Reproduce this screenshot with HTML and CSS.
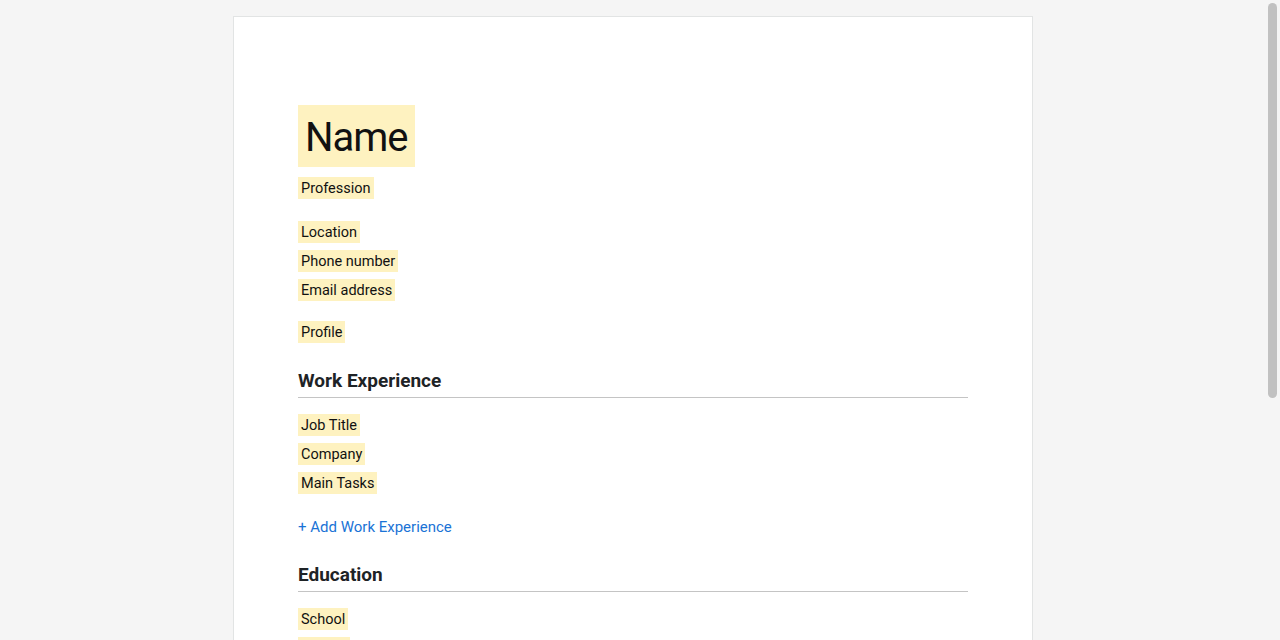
FILE: index.html
```html
<!DOCTYPE html>
<html lang="en">
<head>
<meta charset="utf-8">
<title>Resume</title>
<link rel="stylesheet" href="styles.css">
</head>
<body>
<main class="sheet">
  <div class="name field">Name</div>
  <div class="field profession">Profession</div>

  <div class="group contact">
    <div class="field">Location</div>
    <div class="field">Phone number</div>
    <div class="field">Email address</div>
  </div>

  <div class="group profile">
    <div class="field">Profile</div>
  </div>

  <section class="section">
    <h2 class="section-title">Work Experience</h2>
    <div class="group">
      <div class="field">Job Title</div>
      <div class="field">Company</div>
      <div class="field">Main Tasks</div>
    </div>
    <a class="add-link" href="#">+ Add Work Experience</a>
  </section>

  <section class="section">
    <h2 class="section-title">Education</h2>
    <div class="group">
      <div class="field">School</div>
      <div class="field">Degree</div>
      <div class="field">Dates</div>
    </div>
  </section>
</main>
<div class="scroll-thumb"></div>
</body>
</html>
```

FILE: styles.css
```css
html {
  overflow: hidden;
  height: 100%;
}

body {
  margin: 0;
  padding: 0 14px 0 0;
  background: #f5f5f5;
  font-family: Roboto, "Liberation Sans", Arial, sans-serif;
  color: #111;
}

.sheet {
  width: 800px;
  box-sizing: border-box;
  margin: 16px auto 0;
  padding: 88px 64px 40px;
  background: #fff;
  border: 1px solid #e2e4e4;
  border-bottom: none;
  min-height: 1000px;
  display: flex;
  flex-direction: column;
  align-items: flex-start;
}

.field {
  background: #fef2c0;
  font-size: 14.5px;
  line-height: 21px;
  padding: 1px 3px 0;
  color: #111;
}

.name {
  font-size: 40px;
  line-height: 59px;
  letter-spacing: -1px;
  padding: 3px 7px 0 7px;
}

.profession {
  margin-top: 10px;
}

.group {
  display: flex;
  flex-direction: column;
  align-items: flex-start;
  gap: 7px;
}

.contact {
  margin-top: 22px;
}

.profile {
  margin-top: 20px;
}

.section {
  align-self: stretch;
  display: flex;
  flex-direction: column;
  align-items: flex-start;
}

.section:first-of-type {
  margin-top: 26px;
}

.section + .section {
  margin-top: 25px;
}

.section-title {
  align-self: stretch;
  margin: 0 0 16px;
  font-size: 19px;
  line-height: 24px;
  font-weight: 700;
  color: #1e2326;
  padding-bottom: 4px;
  border-bottom: 1px solid #c4c4c4;
}

.add-link {
  margin-top: 22px;
  font-size: 15px;
  line-height: 22px;
  color: #1a73d6;
  text-decoration: none;
}

.scroll-thumb {
  position: fixed;
  top: 3px;
  right: 3px;
  width: 9px;
  height: 395px;
  border-radius: 5px;
  background: #c1c1c1;
}
```
